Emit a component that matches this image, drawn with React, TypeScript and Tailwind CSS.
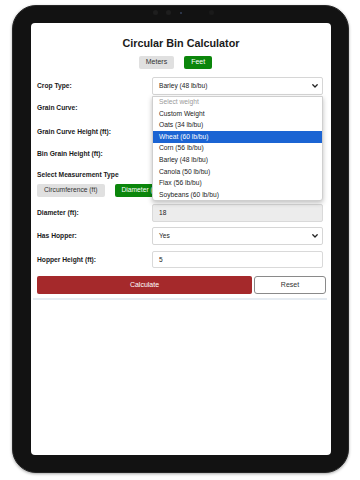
import React from "react";

const Chevron = () => (
  <svg width="6" height="4" viewBox="0 0 6 4" className="absolute right-[4px] top-1/2 -translate-y-1/2">
    <path d="M0.8 0.8 L3 3 L5.2 0.8" fill="none" stroke="#222" strokeWidth="1.3" strokeLinecap="round" strokeLinejoin="round" />
  </svg>
);

const SelectBox = ({ value, h = "h-[18px]" }: { value: string; h?: string }) => (
  <div className={`relative w-[171px] ${h} bg-white border border-[#d6d6d6] rounded-[2px] flex items-center pl-[6px] text-[6.6px] text-[#222]`}>
    {value}
    <Chevron />
  </div>
);

const InputBox = ({ value, grey = false, h = "h-[18px]" }: { value: string; grey?: boolean; h?: string }) => (
  <div
    className={`w-[171px] ${h} ${grey ? "bg-[#ececec]" : "bg-white"} border border-[#d9d9d9] rounded-[2px] flex items-center pl-[6px] text-[6.6px] text-[#222]`}
  >
    {value}
  </div>
);

const Label = ({ children }: { children: React.ReactNode }) => (
  <div className="flex-1 text-[6.7px] font-bold text-[#1a1a1a] leading-[8px]">{children}</div>
);

const options = [
  "Select weight",
  "Custom Weight",
  "Oats (34 lb/bu)",
  "Wheat (60 lb/bu)",
  "Corn (56 lb/bu)",
  "Barley (48 lb/bu)",
  "Canola (50 lb/bu)",
  "Flax (56 lb/bu)",
  "Soybeans (60 lb/bu)",
];

export default function App() {
  return (
    <div className="w-[360px] h-[480px] bg-white font-['Liberation_Sans',Arial,sans-serif] pt-[5px] pl-[12px]">
      <div className="relative w-[337px] h-[468px] rounded-[24px] bg-[#121212] border border-[#262626] shadow-[0_1px_3px_rgba(0,0,0,0.35)] pt-[17px] pl-[18px]">
        {/* camera strip */}
        <div className="absolute top-[4px] left-[140px] flex items-center gap-[8px]">
          <div className="w-[5px] h-[5px] rounded-full bg-[#1e1e1e]" />
          <div className="w-[5px] h-[5px] rounded-full bg-[#1e1e1e]" />
          <div className="w-[2px] h-[2px] rounded-full bg-[#34405a] mx-[1px]" />
          <div className="w-[5px] h-[5px] rounded-full bg-[#1a1a1a] ml-[18px]" />
        </div>

        <div className="w-[300px] h-[432px] bg-white rounded-[4px] overflow-hidden">
          <div className="pl-[6px] pr-[5px] pt-[14px] flex flex-col">
            <div className="text-center text-[10.8px] font-bold text-[#1a1a1a] leading-[13px] pr-[1px]">
              Circular Bin Calculator
            </div>

            <div className="mt-[6px] flex justify-center gap-[10px] pr-[12px]">
              <div className="h-[13px] px-[7px] bg-[#e0e0e0] rounded-[2px] text-[7px] text-[#333] flex items-center">
                Meters
              </div>
              <div className="h-[13px] px-[7px] bg-[#0b860b] rounded-[2px] text-[7px] text-white flex items-center">
                Feet
              </div>
            </div>

            {/* Crop Type */}
            <div className="mt-[8px] flex items-center pr-[3px] h-[18px]">
              <Label>Crop Type:</Label>
              <div className="relative">
                <SelectBox value="Barley (48 lb/bu)" />
                <div className="absolute z-10 top-[18.5px] left-0 w-[171px] bg-white border border-[#cfcfcf] rounded-b-[3px] shadow-[0_2px_5px_rgba(0,0,0,0.25)] overflow-hidden">
                  {options.map((o, i) => (
                    <div
                      key={o}
                      className={`h-[11.55px] flex items-center pl-[6px] text-[6.7px] ${
                        i === 3 ? "bg-[#1b64d3] text-white" : i === 0 ? "text-[#9a9a9a]" : "text-[#222]"
                      }`}
                    >
                      {o}
                    </div>
                  ))}
                </div>
              </div>
            </div>

            <div className="mt-[4px] flex items-center pr-[3px] h-[18px]">
              <Label>Grain Curve:</Label>
              <SelectBox value="Peaked" />
            </div>

            <div className="mt-[6px] flex items-center pr-[3px] h-[18px]">
              <Label>Grain Curve Height (ft):</Label>
              <InputBox value="" />
            </div>

            <div className="mt-[4px] flex items-center pr-[3px] h-[18px]">
              <Label>Bin Grain Height (ft):</Label>
              <InputBox value="" />
            </div>

            <div className="mt-[8px] text-[6.7px] font-bold text-[#1a1a1a] leading-[8px]">Select Measurement Type</div>

            <div className="mt-[5px] flex gap-[10px]">
              <div className="h-[13px] px-[7px] bg-[#e0e0e0] rounded-[2px] text-[6.7px] text-[#333] flex items-center">
                Circumference (ft)
              </div>
              <div className="h-[13px] px-[7px] bg-[#0b860b] rounded-[2px] text-[6.7px] text-white flex items-center">
                Diameter (ft)
              </div>
            </div>

            <div className="mt-[7px] flex items-center pr-[3px] h-[18px]">
              <Label>Diameter (ft):</Label>
              <InputBox value="18" grey />
            </div>

            <div className="mt-[5px] flex items-center pr-[3px] h-[18px]">
              <Label>Has Hopper:</Label>
              <SelectBox value="Yes" />
            </div>

            <div className="mt-[6px] flex items-center pr-[3px] h-[17px]">
              <Label>Hopper Height (ft):</Label>
              <InputBox value="5" h="h-[17px]" />
            </div>

            <div className="mt-[8px] flex gap-[2px] h-[18px]">
              <div className="w-[215px] bg-[#a5292b] rounded-[2px] text-[7px] text-white flex items-center justify-center">
                Calculate
              </div>
              <div className="w-[72px] bg-white border border-[#8a8a8a] rounded-[3px] text-[7px] text-[#333] flex items-center justify-center">
                Reset
              </div>
            </div>

            <div className="mt-[4px] -ml-[4px] mr-[-1px] h-[1.5px] bg-[#e6ecf2]" />
          </div>
        </div>
      </div>
    </div>
  );
}
